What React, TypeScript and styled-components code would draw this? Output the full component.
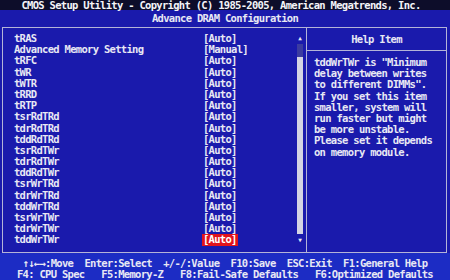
import React from 'react';
import styled, { createGlobalStyle } from 'styled-components';

const GlobalStyle = createGlobalStyle`
  html, body {
    margin: 0;
    padding: 0;
    background: #1a1aac;
    overflow: hidden;
  }
`;

const Screen = styled.div`
  width: 450px;
  height: 280px;
  display: flex;
  flex-direction: column;
  background: #1a1aac;
  color: #e8e8f4;
  font-family: "DejaVu Sans Mono", "Liberation Mono", monospace;
  font-weight: bold;
  font-size: 10.5px;
  letter-spacing: -0.7px;
  white-space: pre;
`;

const TopBar = styled.div`
  height: 10px;
  line-height: 10px;
  background: #0d0d2a;
  color: #f4f4f8;
  text-align: center;
  padding-right: 8px;
`;

const SubTitle = styled.div`
  height: 14px;
  line-height: 14px;
  text-align: center;
  padding-top: 1px;
`;

const Frame = styled.div`
  margin: 2px 3px 0 2px;
  height: 224px;
  border: 1px solid #b4b4d8;
  display: grid;
  grid-template-columns: 303px 1fr;
`;

const MainPanel = styled.div`
  display: flex;
  padding-right: 3px;
`;

const List = styled.div`
  flex: 1;
  padding: 5px 0 0 11px;
`;

const Row = styled.div`
  display: flex;
  height: 11.2px;
  line-height: 11.2px;
`;

const Label = styled.span`
  width: 189px;
`;

const Value = styled.span<{ $selected?: boolean }>`
  padding: 0 1px;
  margin-left: -1px;
  background: ${p => (p.$selected ? '#e2141c' : 'transparent')};
  color: ${p => (p.$selected ? '#ffffff' : 'inherit')};
`;

const Scrollbar = styled.div`
  width: 6px;
  display: flex;
  flex-direction: column;
  align-items: center;
  padding: 6px 0 8px;
`;

const Arrow = styled.div`
  height: 8px;
  font-size: 6px;
  line-height: 8px;
  letter-spacing: 0;
  color: #e8e8f4;
`;

const Track = styled.div`
  flex: 1;
  width: 6px;
  display: flex;
  flex-direction: column;
  background: #3c3ca0;
  margin: 2px 0;
`;

const Thumb = styled.div`
  flex: 1;
  margin-top: 13px;
  background: #d4d4e4;
`;

const HelpPanel = styled.div`
  border-left: 1px solid #b4b4d8;
  display: flex;
  flex-direction: column;
`;

const HelpHeader = styled.div`
  height: 22px;
  line-height: 22px;
  text-align: center;
  border-bottom: 1px solid #b4b4d8;
`;

const HelpBody = styled.div`
  padding: 6px 0 0 7px;
  line-height: 11.2px;
`;

const Footer = styled.div`
  flex: 1;
  background: #1c2cc4;
  text-align: center;
  padding-top: 5px;
  line-height: 11px;
`;

const items = [
  'tRAS',
  'Advanced Memory Setting',
  'tRFC',
  'tWR',
  'tWTR',
  'tRRD',
  'tRTP',
  'tsrRdTRd',
  'tdrRdTRd',
  'tddRdTRd',
  'tsrRdTWr',
  'tdrRdTWr',
  'tddRdTWr',
  'tsrWrTRd',
  'tdrWrTRd',
  'tddWrTRd',
  'tsrWrTWr',
  'tdrWrTWr',
  'tddWrTWr',
];

const helpText = [
  'tddWrTWr is "Minimum',
  'delay between writes',
  'to different DIMMs".',
  'If you set this item',
  'smaller, system will',
  'run faster but might',
  'be more unstable.',
  'Please set it depends',
  'on memory module.',
];

const App: React.FC = () => {
  return (
    <>
      <GlobalStyle />
      <Screen>
        <TopBar>CMOS Setup Utility - Copyright (C) 1985-2005, American Megatrends, Inc.</TopBar>
        <SubTitle>Advance DRAM Configuration</SubTitle>
        <Frame>
          <MainPanel>
            <List>
              {items.map((name, i) => (
                <Row key={name}>
                  <Label>{name}</Label>
                  <Value $selected={i === items.length - 1}>
                    {name === 'Advanced Memory Setting' ? '[Manual]' : '[Auto]'}
                  </Value>
                </Row>
              ))}
            </List>
            <Scrollbar>
              <Arrow>▲</Arrow>
              <Track>
                <Thumb />
              </Track>
              <Arrow>▼</Arrow>
            </Scrollbar>
          </MainPanel>
          <HelpPanel>
            <HelpHeader>Help Item</HelpHeader>
            <HelpBody>
              {helpText.map(line => (
                <div key={line}>{line}</div>
              ))}
            </HelpBody>
          </HelpPanel>
        </Frame>
        <Footer>
          <div>{'↑↓←→:Move  Enter:Select  +/-/:Value  F10:Save  ESC:Exit  F1:General Help'}</div>
          <div>{'F4: CPU Spec   F5:Memory-Z   F8:Fail-Safe Defaults   F6:Optimized Defaults'}</div>
        </Footer>
      </Screen>
    </>
  );
};

export default App;
